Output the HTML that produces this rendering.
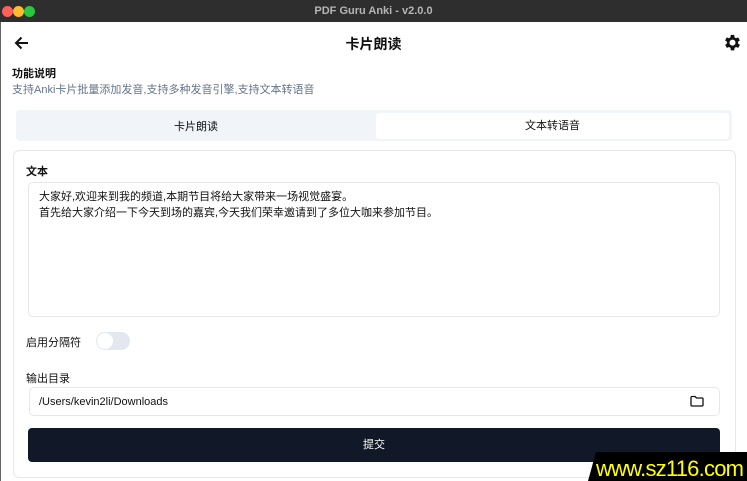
<!DOCTYPE html>
<html><head><meta charset="utf-8"><style>
*{margin:0;padding:0;box-sizing:border-box}
body{width:747px;height:481px;overflow:hidden;background:#fff;font-family:"Liberation Sans","Noto Sans CJK SC",sans-serif;color:#111;position:relative}
.a{position:absolute}
.tb{left:0;top:0;width:747px;height:22px;background:#2e2e2e;color:#b5b5b5;font-size:11px;font-weight:bold;text-align:center;line-height:22px}
.dot{top:6px;width:11px;height:11px;border-radius:50%}
</style></head><body>
<div class="a tb">PDF Guru Anki - v2.0.0</div>
<div class="a dot" style="left:2px;background:#fe5f57"></div>
<div class="a dot" style="left:13px;background:#febc2e"></div>
<div class="a dot" style="left:24px;background:#28c840"></div>
<div class="a" style="left:0;top:22px;width:1px;height:459px;background:#666"></div>
<svg class="a" style="left:14px;top:36px" width="15" height="14" viewBox="0 0 15 14"><path d="M14 7H2M7.5 1.5L2 7l5.5 5.5" stroke="#111" stroke-width="2" fill="none"/></svg>
<div class="a" style="left:0;width:747px;top:34px;text-align:center;font-size:14px;font-weight:bold">卡片朗读</div>
<svg class="a" style="left:723px;top:34px" width="19" height="19" viewBox="2 2 22 22"><path fill="#111" d="M19.4 13a7.5 7.5 0 000-2l2.1-1.6-2-3.5-2.5 1a7.6 7.6 0 00-1.7-1L15 3h-4l-.4 2.9a7.6 7.6 0 00-1.7 1l-2.5-1-2 3.5L6.6 11a7.5 7.5 0 000 2l-2.1 1.6 2 3.5 2.5-1a7.6 7.6 0 001.7 1L11 21h4l.4-2.9a7.6 7.6 0 001.7-1l2.5 1 2-3.5zM13 15.5a3.5 3.5 0 110-7 3.5 3.5 0 010 7z"/></svg>
<div class="a" style="left:12px;top:65px;font-size:11px;font-weight:bold">功能说明</div>
<div class="a" style="left:12px;top:81px;font-size:11px;color:#64748b">支持Anki卡片批量添加发音,支持多种发音引擎,支持文本转语音</div>
<div class="a" style="left:16px;top:110px;width:716px;height:31px;background:#f1f5f9;border-radius:4px"></div>
<div class="a" style="left:16px;top:118px;width:360px;text-align:center;font-size:11px">卡片朗读</div>
<div class="a" style="left:376px;top:113px;width:353px;height:26px;background:#fff;border-radius:3px;text-align:center;font-size:11px;line-height:26px">文本转语音</div>
<div class="a" style="left:13px;top:150px;width:723px;height:328px;border:1px solid #e5e7eb;border-radius:6px"></div>
<div class="a" style="left:26px;top:163px;font-size:11px;font-weight:bold">文本</div>
<div class="a" style="left:28px;top:182px;width:692px;height:135px;border:1px solid #e5e7eb;border-radius:5px;padding:6px 10px;font-size:11px;line-height:16px">大家好,欢迎来到我的频道,本期节目将给大家带来一场视觉盛宴。<br>首先给大家介绍一下今天到场的嘉宾,今天我们荣幸邀请到了多位大咖来参加节目。</div>
<div class="a" style="left:26px;top:334px;font-size:11px">启用分隔符</div>
<div class="a" style="left:96px;top:332px;width:34px;height:18px;background:#e2e8f0;border-radius:9px"><div style="margin:1px;width:16px;height:16px;border-radius:50%;background:#fff"></div></div>
<div class="a" style="left:26px;top:370px;font-size:11px">输出目录</div>
<div class="a" style="left:29px;top:387px;width:691px;height:29px;border:1px solid #e5e7eb;border-radius:5px;padding-left:9px;font-size:11px;line-height:29px">/Users/kevin2li/Downloads</div>
<svg class="a" style="left:690px;top:395px" width="14" height="12" viewBox="0 0 14 12"><path d="M1 2.5a1 1 0 011-1h3l1.5 1.5H12a1 1 0 011 1V10a1 1 0 01-1 1H2a1 1 0 01-1-1z" stroke="#111" stroke-width="1.3" fill="none"/></svg>
<div class="a" style="left:28px;top:428px;width:692px;height:34px;background:#111827;border-radius:4px;color:#fff;text-align:center;font-size:11px;line-height:34px">提交</div>
<svg class="a" style="left:588px;top:452px" width="159" height="29"><polygon points="8,0 159,0 159,29 0,29" fill="#000"/><text x="8" y="24" fill="#ffff00" font-family="Liberation Sans Narrow, Liberation Sans, sans-serif" font-size="22" textLength="148">www.sz116.com</text></svg>
</body></html>
